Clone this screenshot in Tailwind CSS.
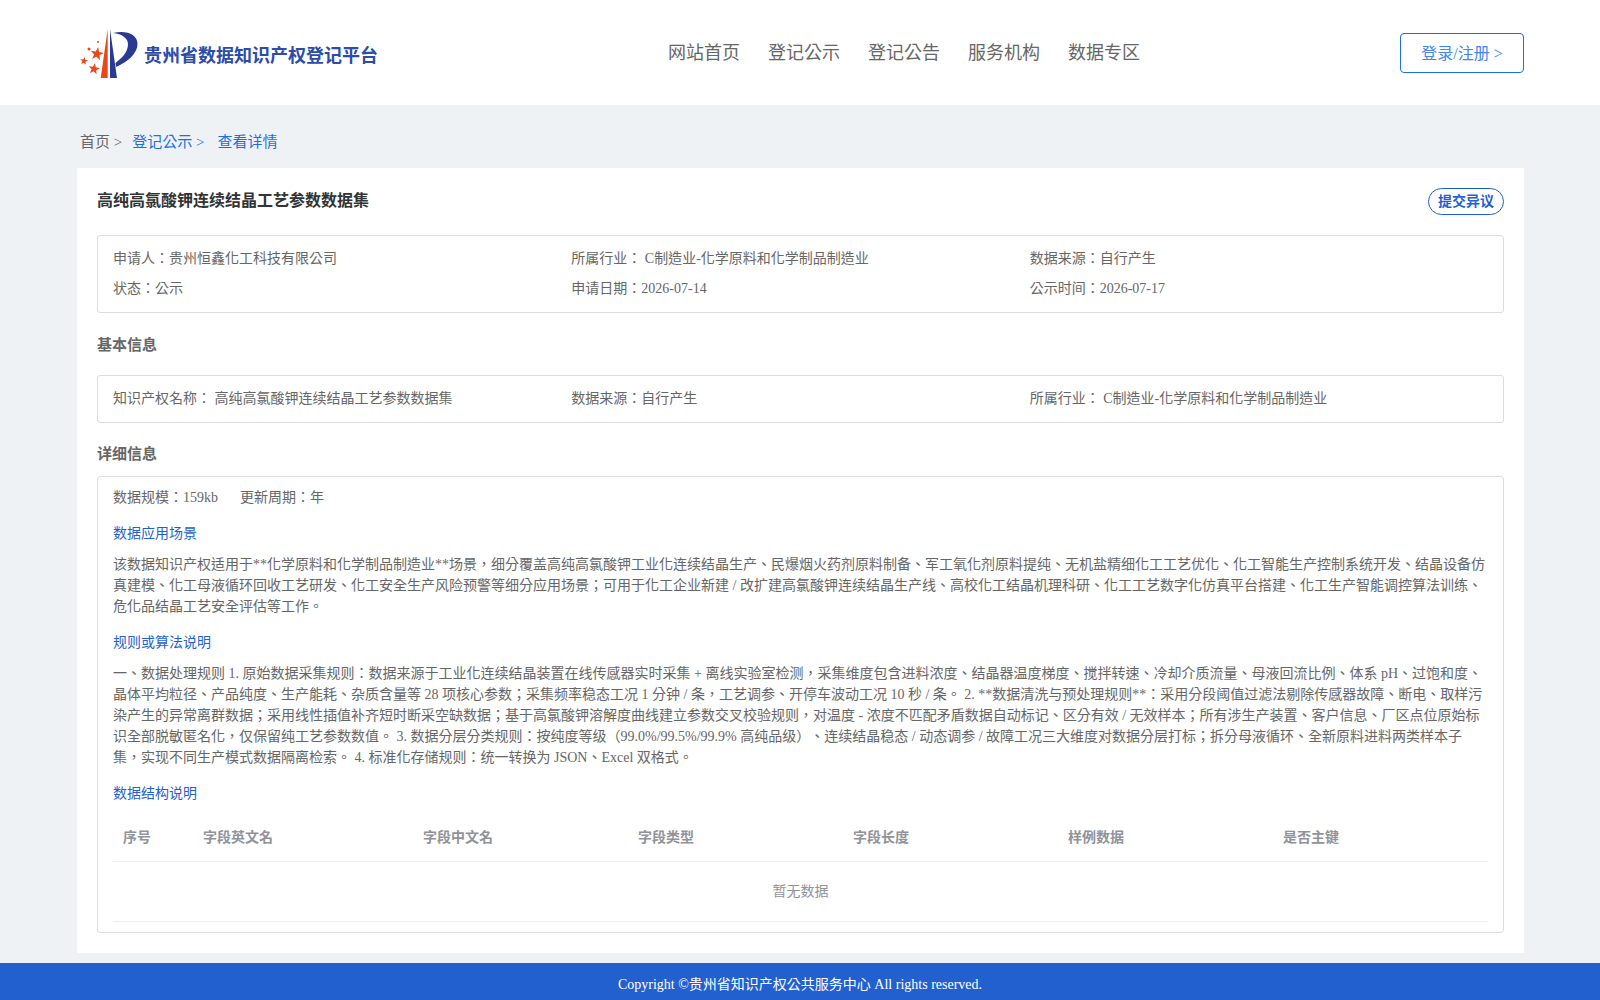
<!DOCTYPE html>
<html lang="zh-TW">
<head>
  <meta charset="UTF-8" />
  <title>贵州省数据知识产权登记平台</title>
  <script src="https://cdn.jsdelivr.net/npm/@tailwindcss/browser@4"></script>
</head>
<body class="h-[1000px] overflow-hidden flex flex-col bg-[#eff2f5] text-sm font-['Liberation_Serif','Noto_Sans_CJK_TC',serif] [text-spacing-trim:space-all] text-[#666]">

  <!-- Header -->
  <header class="h-[105px] bg-white pl-[80px] pr-[76px] flex items-center">
    <div class="flex items-center w-[588px]">
      <svg class="w-[58px] h-[52px] mt-[2px]" viewBox="0 0 58 52">
        <path d="M27.700 1 L27.700 50 L20.700 50 Z" fill="#e8481a" />
        <path d="M30 1 L37 50 L30 50 Z" fill="#2a3a94" />
        <path d="M33 5 C46 2 57.500 6 57.500 16 C57.500 26 47 34 36 39 L35.500 35 C42 30 48 24 48 16 C48 10 42 6 33 5 Z" fill="#2a3a94" />
        <polygon transform="translate(17 26) rotate(10) scale(.7)" points="0,-10 2.35,-3.24 9.51,-3.09 3.8,1.24 5.88,8.09 0,4 -5.88,8.09 -3.8,1.24 -9.51,-3.09 -2.35,-3.24" fill="#e8481a" />
        <polygon transform="translate(14 41) rotate(10) scale(.6)" points="0,-10 2.35,-3.24 9.51,-3.09 3.8,1.24 5.88,8.09 0,4 -5.88,8.09 -3.8,1.24 -9.51,-3.09 -2.35,-3.24" fill="#e8481a" />
        <polygon transform="translate(4 33) rotate(10) scale(.42)" points="0,-10 2.35,-3.24 9.51,-3.09 3.8,1.24 5.88,8.09 0,4 -5.88,8.09 -3.8,1.24 -9.51,-3.09 -2.35,-3.24" fill="#e8481a" />
        <circle cx="9" cy="21" r="1.500" fill="#e8481a" />
        <circle cx="18" cy="14" r="1" fill="#e8481a" />
      </svg>
      <span class="ml-[6px] mt-[7px] text-lg font-bold text-[#2b4ca8]">贵州省数据知识产权登记平台</span>
    </div>
    <nav class="flex gap-[28px] text-lg text-[#666]">
      <a href="#">网站首页</a>
      <a href="#">登记公示</a>
      <a href="#">登记公告</a>
      <a href="#">服务机构</a>
      <a href="#">数据专区</a>
    </nav>
    <a href="#" class="ml-auto w-[124px] h-[40px] pt-[2px] flex items-center justify-center border border-[#1a6fe8] rounded text-base text-[#3f86ee]">登录/注册 &gt;</a>
  </header>

  <main class="flex-1 ml-[77px] mr-[76px]">
    <!-- Breadcrumb -->
    <div class="h-[63px] pl-[3px] pt-[12px] flex items-center text-[15px]">
      <span class="text-[#666]">首页 &gt;</span>
      <a href="#" class="ml-[10px] text-[#1a6fe8]">登记公示 &gt;</a>
      <a href="#" class="ml-[13px] text-[#1a6fe8]">查看详情</a>
    </div>

    <section class="h-[785px] bg-white px-[20px] pt-[20px]">
      <div class="h-[47px] flex items-start justify-between">
        <h1 class="text-base leading-[26px] font-bold text-[#333]">高纯高氯酸钾连续结晶工艺参数数据集</h1>
        <button class="w-[76px] h-[27px] border border-[#1f5fcf] rounded-full text-sm font-bold text-[#1f5fcf]">提交异议</button>
      </div>

      <div class="h-[78px] border border-[#ddd] rounded-[3px] px-[15px] pt-[12px] grid grid-cols-3 content-start gap-y-[9px] leading-[21px]">
        <div>申请人：贵州恒鑫化工科技有限公司</div>
        <div>所属行业： C制造业-化学原料和化学制品制造业</div>
        <div>数据来源：自行产生</div>
        <div>状态：公示</div>
        <div>申请日期：2026-07-14</div>
        <div>公示时间：2026-07-17</div>
      </div>

      <h2 class="h-[62px] pt-[4px] flex items-center text-[15px] font-bold">基本信息</h2>

      <div class="h-[48px] border border-[#ddd] rounded-[3px] px-[15px] grid grid-cols-3 items-center">
        <div>知识产权名称： 高纯高氯酸钾连续结晶工艺参数数据集</div>
        <div>数据来源：自行产生</div>
        <div>所属行业： C制造业-化学原料和化学制品制造业</div>
      </div>

      <h2 class="h-[53px] pt-[10px] flex items-center text-[15px] font-bold">详细信息</h2>

      <div class="h-[457px] border border-[#ddd] rounded-[3px] px-[15px] pt-[10px] leading-[21px]">
        <div class="flex gap-[22px]">
          <span>数据规模：159kb</span>
          <span>更新周期：年</span>
        </div>
        <h3 class="mt-[15px] text-[#1f5fcf]">数据应用场景</h3>
        <p class="mt-[10px]">该数据知识产权适用于**化学原料和化学制品制造业**场景，细分覆盖高纯高氯酸钾工业化连续结晶生产、民爆烟火药剂原料制备、军工氧化剂原料提纯、无机盐精细化工工艺优化、化工智能生产控制系统开发、结晶设备仿真建模、化工母液循环回收工艺研发、化工安全生产风险预警等细分应用场景；可用于化工企业新建 / 改扩建高氯酸钾连续结晶生产线、高校化工结晶机理科研、化工工艺数字化仿真平台搭建、化工生产智能调控算法训练、危化品结晶工艺安全评估等工作。</p>
        <h3 class="mt-[15px] text-[#1f5fcf]">规则或算法说明</h3>
        <p class="mt-[10px]">一、数据处理规则 1. 原始数据采集规则：数据来源于工业化连续结晶装置在线传感器实时采集 + 离线实验室检测，采集维度包含进料浓度、结晶器温度梯度、搅拌转速、冷却介质流量、母液回流比例、体系 pH、过饱和度、晶体平均粒径、产品纯度、生产能耗、杂质含量等 28 项核心参数；采集频率稳态工况 1 分钟 / 条，工艺调参、开停车波动工况 10 秒 / 条。 2. **数据清洗与预处理规则**：采用分段阈值过滤法剔除传感器故障、断电、取样污染产生的异常离群数据；采用线性插值补齐短时断采空缺数据；基于高氯酸钾溶解度曲线建立参数交叉校验规则，对温度 - 浓度不匹配矛盾数据自动标记、区分有效 / 无效样本；所有涉生产装置、客户信息、厂区点位原始标识全部脱敏匿名化，仅保留纯工艺参数数值。 3. 数据分层分类规则：按纯度等级（99.0%/99.5%/99.9% 高纯品级）、连续结晶稳态 / 动态调参 / 故障工况三大维度对数据分层打标；拆分母液循环、全新原料进料两类样本子集，实现不同生产模式数据隔离检索。 4. 标准化存储规则：统一转换为 JSON、Excel 双格式。</p>
        <h3 class="mt-[15px] text-[#1f5fcf]">数据结构说明</h3>
        <table class="mt-[10px] w-full table-fixed">
          <colgroup>
            <col class="w-[80px]" /><col class="w-[220px]" /><col class="w-[215px]" /><col class="w-[215px]" /><col class="w-[215px]" /><col class="w-[215px]" /><col class="w-[215px]" />
          </colgroup>
          <thead>
            <tr class="h-[47px] border-b border-[#ebeef5] text-left text-[#909399]">
              <th class="px-[10px]">序号</th>
              <th class="px-[10px]">字段英文名</th>
              <th class="px-[10px]">字段中文名</th>
              <th class="px-[10px]">字段类型</th>
              <th class="px-[10px]">字段长度</th>
              <th class="px-[10px]">样例数据</th>
              <th class="px-[10px]">是否主键</th>
            </tr>
          </thead>
          <tbody>
            <tr class="h-[60px] border-b border-[#ebeef5]">
              <td colspan="7" class="text-center text-[#909399]">暂无数据</td>
            </tr>
          </tbody>
        </table>
      </div>
    </section>
  </main>

  <footer class="h-[37px] pt-[7px] mt-auto bg-[#2260cf] flex items-center justify-center text-white">
    Copyright ©贵州省知识产权公共服务中心 All rights reserved.
  </footer>
</body>
</html>
